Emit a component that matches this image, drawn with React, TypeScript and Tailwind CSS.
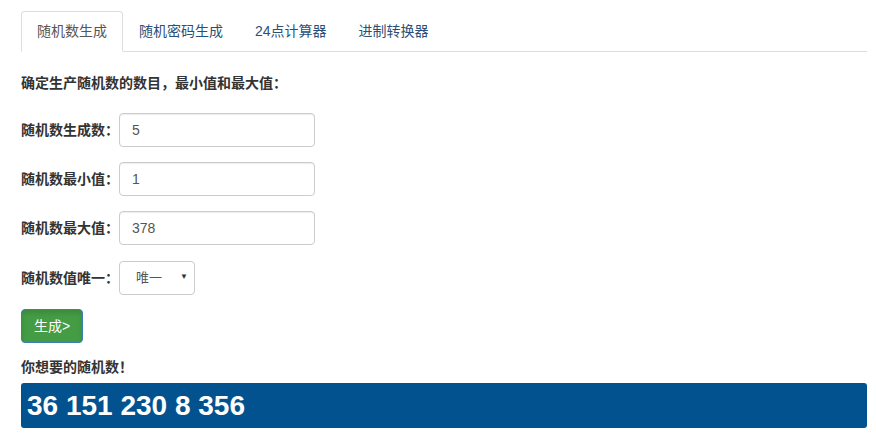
import { useState } from "react";

const tabs = ["随机数生成", "随机密码生成", "24点计算器", "进制转换器"];

const fields = [
  { label: "随机数生成数：", value: "5", mt: "mt-[21px]" },
  { label: "随机数最小值：", value: "1", mt: "mt-[15px]" },
  { label: "随机数最大值：", value: "378", mt: "mt-[15px]" },
];

const font = "font-['Liberation_Sans','Noto_Sans_CJK_SC',sans-serif]";

export default function App() {
  const [active] = useState(0);
  const [unique, setUnique] = useState("唯一");

  return (
    <div className={`w-[876px] h-[434px] bg-white px-[21px] pt-[11px] ${font} text-[#333]`}>
      {/* Tabs */}
      <ul className="flex border-b border-[#ddd] w-[846px]">
        {tabs.map((t, i) => (
          <li
            key={t}
            className={`h-[41px] px-[15px] flex items-center text-[14px] -mb-px ${
              i === active
                ? "border border-[#ddd] border-b-white rounded-t-[4px] bg-white text-[#555]"
                : "border border-transparent text-[#2a5079]"
            }`}
          >
            {t}
          </li>
        ))}
      </ul>

      <p className="mt-[22px] h-[18px] leading-[18px] text-[14px] font-bold text-[#333]">
        确定生产随机数的数目，最小值和最大值：
      </p>

      {fields.map((f) => (
        <div key={f.label} className={`${f.mt} flex items-center`}>
          <label className="w-[98px] text-[14px] font-bold text-[#333] whitespace-nowrap">{f.label}</label>
          <input
            className="w-[196px] h-[34px] px-[12px] text-[14px] text-[#555] border border-[#ccc] rounded-[4px] shadow-[inset_0_1px_1px_rgba(0,0,0,0.075)] outline-none"
            defaultValue={f.value}
          />
        </div>
      ))}

      <div className="mt-[16px] flex items-center">
        <label className="w-[98px] text-[14px] font-bold text-[#333] whitespace-nowrap">随机数值唯一：</label>
        <div className="relative w-[76px] h-[34px]">
          <select
            value={unique}
            onChange={(e) => setUnique(e.target.value)}
            className="appearance-none w-full h-full pl-[16px] text-[13px] text-[#555] bg-white border border-[#ccc] rounded-[4px] outline-none"
          >
            <option>唯一</option>
            <option>不唯一</option>
          </select>
          <span className="absolute right-[7px] top-[10px] text-[8px] text-[#333] pointer-events-none">▼</span>
        </div>
      </div>

      <button className="mt-[14px] w-[62px] h-[34px] text-[14px] text-white bg-[#449d44] border border-[#3a7fb8] rounded-[4px] shadow-[inset_0_3px_5px_rgba(0,0,0,0.125)]">
        生成&gt;
      </button>

      <p className="mt-[15px] h-[18px] leading-[18px] text-[14px] font-bold text-[#333]">
        你想要的随机数！
      </p>

      <div className="mt-[7px] w-[846px] h-[45px] bg-[#02528f] rounded-[3px] flex items-center px-[6px]">
        <span className="text-white text-[28px] font-bold leading-none">36 151 230 8 356</span>
      </div>
    </div>
  );
}
